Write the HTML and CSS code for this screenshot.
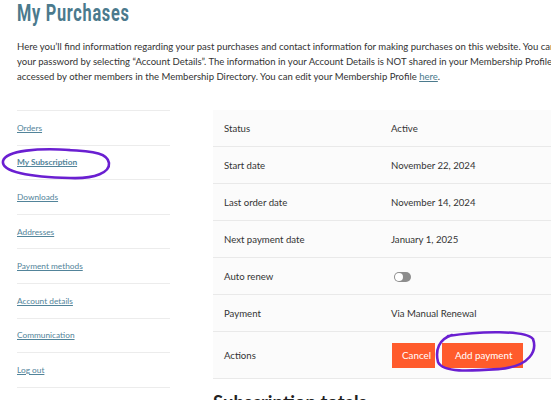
FILE: index.html
```html
<!DOCTYPE html>
<html lang="en">
<head>
<meta charset="utf-8">
<title>My Purchases</title>
<link rel="stylesheet" href="styles.css">
</head>
<body>
<div class="page">
  <h1 class="title"><span class="title-text">My Purchases</span></h1>
  <p class="intro">Here you’ll find information regarding your past purchases and contact information for making purchases on this website. You can change<br>your password by selecting “Account Details”. The information in your Account Details is NOT shared in your Membership Profile and cannot be<br>accessed by other members in the Membership Directory. You can edit your Membership Profile <a href="#">here</a>.</p>

  <div class="account">
    <nav class="side-nav">
      <a class="nav-item" href="#">Orders</a>
      <a class="nav-item active" href="#">My Subscription</a>
      <a class="nav-item" href="#">Downloads</a>
      <a class="nav-item" href="#">Addresses</a>
      <a class="nav-item" href="#">Payment methods</a>
      <a class="nav-item" href="#">Account details</a>
      <a class="nav-item" href="#">Communication</a>
      <a class="nav-item" href="#">Log out</a>
    </nav>

    <div class="content">
      <table class="details">
        <tr><td class="label">Status</td><td>Active</td></tr>
        <tr><td class="label">Start date</td><td>November 22, 2024</td></tr>
        <tr><td class="label">Last order date</td><td>November 14, 2024</td></tr>
        <tr><td class="label">Next payment date</td><td>January 1, 2025</td></tr>
        <tr><td class="label">Auto renew</td><td><span class="toggle"><span class="knob"></span></span></td></tr>
        <tr><td class="label">Payment</td><td>Via Manual Renewal</td></tr>
        <tr class="actions-row"><td class="label">Actions</td><td><span class="actions"><a class="btn btn-cancel" href="#">Cancel</a><a class="btn btn-add" href="#">Add payment</a></span></td></tr>
      </table>
      <h2 class="totals">Subscription totals</h2>
    </div>
  </div>
</div>

<svg class="marks" width="551" height="400" viewBox="0 0 551 400" aria-hidden="true">
  <path d="M 70 150 C 40 148, 6 150, 3 161 C 1 172, 30 177, 70 178 C 96 179, 110 172, 109 163 C 108 154, 96 151, 66 150" />
  <path d="M 448 336 C 480 331, 525 330, 533 339 C 537 350, 531 366, 500 369 C 470 371, 443 373, 438 362 C 435 350, 439 339, 452 335" />
</svg>
</body>
</html>
```

FILE: styles.css
```css
html, body {
  margin: 0;
  padding: 0;
  background: #ffffff;
  overflow: hidden;
}

body {
  font-family: Lato, "Open Sans", Arial, sans-serif;
  color: #333333;
  width: 551px;
  height: 400px;
  position: relative;
}

.page {
  width: 760px;
  padding-left: 17px;
}

.title {
  margin: 0;
  padding-top: 1px;
  height: 30px;
  font-family: Roboto, "Liberation Sans", sans-serif;
  font-weight: 700;
  font-size: 23px;
  line-height: 26px;
  color: #4b7a8d;
  white-space: nowrap;
}

.title-text {
  display: inline-block;
  transform: scaleX(0.71);
  transform-origin: left center;
  letter-spacing: 1px;
}

.intro {
  margin: 8px 0 0;
  font-size: 9.55px;
  line-height: 15px;
  color: #333;
  white-space: nowrap;
}

.intro a {
  color: #4b7a8d;
}

.account {
  display: flex;
  margin-top: 26px;
  gap: 43px;
}

.side-nav {
  display: flex;
  flex-direction: column;
  width: 153px;
  flex: none;
  border-top: 1px solid #ececec;
}

.nav-item {
  height: 33.6px;
  display: flex;
  align-items: center;
  border-bottom: 1px solid #ececec;
  font-size: 8.3px;
  color: #52849a;
  text-decoration: underline;
  text-underline-offset: 1px;
}

.nav-item.active {
  font-weight: 700;
}

.content {
  flex: 1;
}

.details {
  width: 520px;
  border-collapse: collapse;
  background: #fbfbfb;
  font-size: 9.6px;
  color: #333;
}

.details td {
  height: 36px;
  padding: 0;
  border-bottom: 1px solid #e9e9e9;
  vertical-align: middle;
}

.details .label {
  width: 167px;
  padding-left: 11px;
}

.details .actions-row td {
  height: 46px;
}

.toggle {
  display: inline-block;
  position: relative;
  width: 17px;
  height: 10px;
  border-radius: 5px;
  background: #8d8d8d;
  vertical-align: middle;
  margin-left: 3px;
}

.knob {
  position: absolute;
  left: 1px;
  top: 1px;
  width: 8px;
  height: 8px;
  border-radius: 50%;
  background: #fff;
}

.actions {
  display: flex;
  gap: 7px;
}

.btn {
  display: inline-flex;
  align-items: center;
  height: 25px;
  background: #ff5b2c;
  color: #fff;
  text-decoration: none;
  font-size: 9.8px;
}

.btn-cancel {
  padding: 0 4px 0 10px;
  margin-left: 1px;
}

.btn-add {
  padding: 0 11px 0 13px;
}

.totals {
  margin: 12px 0 0;
  font-size: 18.5px;
  font-weight: 700;
  color: #222;
  white-space: nowrap;
}

.marks {
  position: absolute;
  left: 0;
  top: 0;
  pointer-events: none;
}

.marks path {
  fill: none;
  stroke: #6a1fd1;
  stroke-width: 2.6;
  stroke-linecap: round;
}
```
